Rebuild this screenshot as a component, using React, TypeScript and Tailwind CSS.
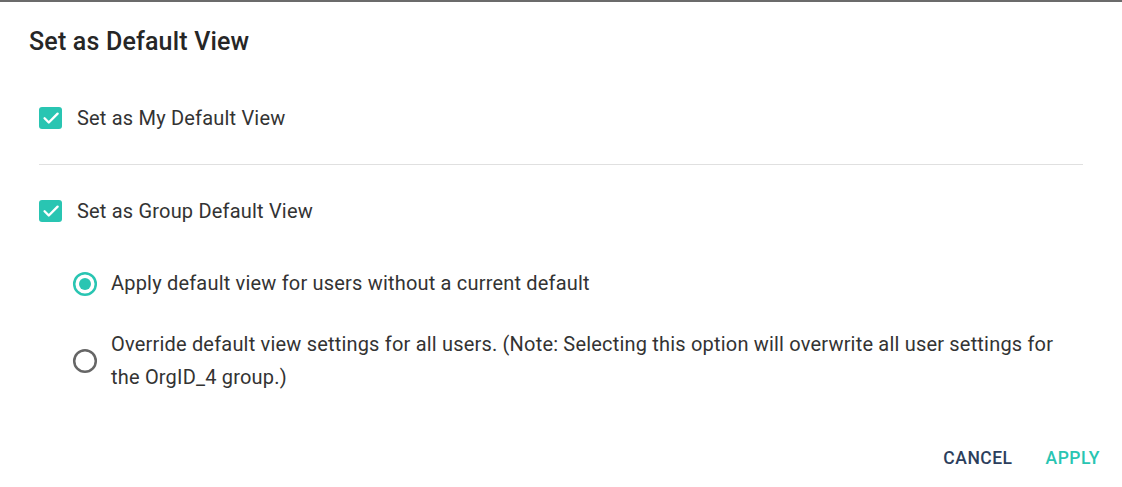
import React, { useState } from "react";

const TEAL = "#29c5b2";

function Checkbox({ checked, onChange }: { checked: boolean; onChange: () => void }) {
  return (
    <button
      type="button"
      onClick={onChange}
      className="flex items-center justify-center w-[23px] h-[22px] rounded-[3px] shrink-0"
      style={{ background: checked ? TEAL : "transparent", border: checked ? "none" : "2px solid #666" }}
    >
      {checked && (
        <svg width="22" height="22" viewBox="0 0 24 24" fill="none">
          <path d="M5 12.3l4.6 4.6L19.2 7.3" stroke="#fff" strokeWidth="2.6" strokeLinecap="round" strokeLinejoin="round" />
        </svg>
      )}
    </button>
  );
}

function Radio({ checked }: { checked: boolean }) {
  return (
    <svg width="26" height="26" viewBox="0 0 26 26" className="shrink-0">
      <circle cx="13" cy="13" r="10.8" fill="none" stroke={checked ? TEAL : "#666"} strokeWidth="2.5" />
      {checked && <circle cx="13" cy="13" r="6" fill={TEAL} />}
    </svg>
  );
}

export default function App() {
  const [mine, setMine] = useState(true);
  const [group, setGroup] = useState(true);
  const [mode, setMode] = useState<"apply" | "override">("apply");

  return (
    <div
      className="w-[1122px] h-[487px] bg-white border-t-2 border-[#6b6b6b] flex flex-col text-[#333] tracking-[0.19px]"
      style={{ fontFamily: "Roboto, 'Liberation Sans', sans-serif" }}
    >
      {/* Title */}
      <h2 className="px-[29px] pt-[20px] text-[25px] leading-[40px] font-medium text-[#262626] tracking-[0.18px]">
        Set as Default View
      </h2>

      <div className="px-[39px] flex flex-col">
        <label className="mt-[36px] h-[40px] flex items-center gap-[15px] text-[20px]">
          <Checkbox checked={mine} onChange={() => setMine(!mine)} />
          <span>Set as My Default View</span>
        </label>

        <div className="mt-[26px] h-px bg-[#e0e0e0]" />

        <label className="mt-[26px] h-[40px] flex items-center gap-[15px] text-[20px]">
          <Checkbox checked={group} onChange={() => setGroup(!group)} />
          <span>Set as Group Default View</span>
        </label>

        <div className="pl-[33px] flex flex-col">
          <label
            className="mt-[36px] flex items-center gap-[13px] text-[20px] leading-[33px] cursor-pointer"
            onClick={() => setMode("apply")}
          >
            <Radio checked={mode === "apply"} />
            <span>Apply default view for users without a current default</span>
          </label>

          <label
            className="mt-[28px] flex items-center gap-[13px] text-[20px] leading-[33px] cursor-pointer"
            onClick={() => setMode("override")}
          >
            <Radio checked={mode === "override"} />
            <span className="max-w-[960px]">
              Override default view settings for all users. (Note: Selecting this option will overwrite all user
              settings for the OrgID_4 group.)
            </span>
          </label>
        </div>
      </div>

      {/* Actions */}
      <div className="mt-auto mb-[16px] pr-[22px] flex justify-end items-center gap-[33px] text-[17.5px] font-medium tracking-[0.5px]">
        <button type="button" className="uppercase text-[#2c3e5c]">CANCEL</button>
        <button type="button" className="uppercase" style={{ color: TEAL }}>APPLY</button>
      </div>
    </div>
  );
}
